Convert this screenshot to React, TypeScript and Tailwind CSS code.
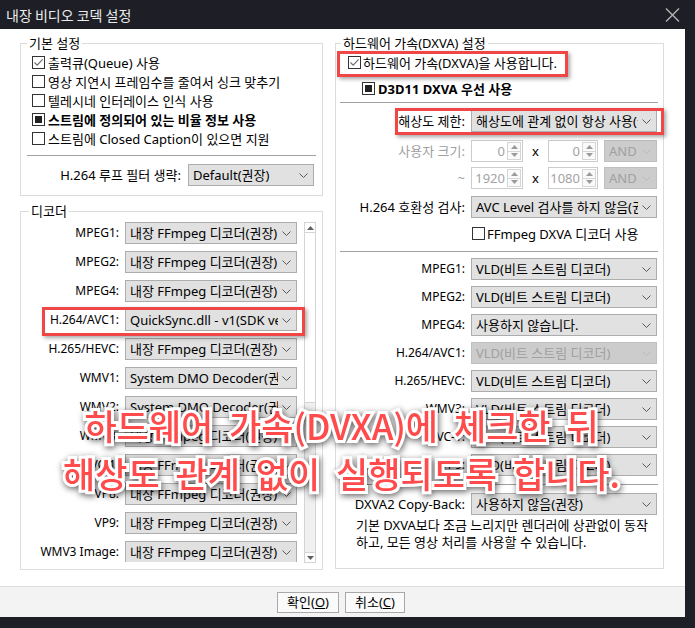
import type { ReactNode } from 'react';

type CheckState = 'on' | 'off' | 'mixed';

function Box({ state }: { state: CheckState }) {
  return (
    <span className="flex h-[13px] w-[13px] shrink-0 items-center justify-center border border-[#333333] bg-white">
      {state === 'on' && (
        <svg width="11" height="11" viewBox="0 0 11 11">
          <path d="M1.5 5.5 L4.2 8.2 L9.6 2.4" fill="none" stroke="#707070" strokeWidth="1.2" />
        </svg>
      )}
      {state === 'mixed' && <span className="h-[7px] w-[7px] bg-[#222222]" />}
    </span>
  );
}

function Chevron({ disabled }: { disabled?: boolean }) {
  return (
    <svg width="9" height="5" viewBox="0 0 9 5" className="shrink-0">
      <path
        d="M0.5 0.5 L4.5 4.5 L8.5 0.5"
        fill="none"
        stroke={disabled ? '#b9b9b9' : '#5a5a5a'}
        strokeWidth="1"
      />
    </svg>
  );
}

function Arrow({ up, color = '#606060' }: { up?: boolean; color?: string }) {
  return (
    <svg width="7" height="4" viewBox="0 0 7 4">
      <path d={up ? 'M0 4 L3.5 0 L7 4 Z' : 'M0 0 L7 0 L3.5 4 Z'} fill={color} />
    </svg>
  );
}

function Combo({
  value,
  className,
  disabled,
}: {
  value: string;
  className: string;
  disabled?: boolean;
}) {
  return (
    <div
      className={`flex h-[22px] shrink-0 items-center border pl-[4px] pr-[5px] ${
        disabled
          ? 'border-[#bfbfbf] bg-[#cccccc] text-[#a0a0a0]'
          : 'border-[#adadad] bg-[#e1e1e1] text-black'
      } ${className}`}
    >
      <span className="min-w-0 flex-1 overflow-hidden whitespace-nowrap leading-[20px]">{value}</span>
      <span className="ml-[4px]">
        <Chevron disabled={disabled} />
      </span>
    </div>
  );
}

function Spin({ value, className }: { value: string; className: string }) {
  return (
    <div className={`flex h-[22px] shrink-0 border border-[#cccccc] bg-white ${className}`}>
      <span className="flex-1 pr-[2px] text-right leading-[20px] text-[#a3a3a3]">{value}</span>
      <div className="my-[1px] mr-[1px] flex w-[14px] flex-col border border-[#d6d6d6] bg-[#fafafa]">
        <span className="flex flex-1 items-center justify-center border-b border-[#d6d6d6]">
          <Arrow up color="#9a9a9a" />
        </span>
        <span className="flex flex-1 items-center justify-center">
          <Arrow color="#9a9a9a" />
        </span>
      </div>
    </div>
  );
}

function Legend({ children, className }: { children: ReactNode; className: string }) {
  return <div className={`-mt-[9px] w-fit bg-white px-[2px] leading-[16px] ${className}`}>{children}</div>;
}

function FormRow({
  label,
  muted,
  small,
  className = '',
  children,
}: {
  label: string;
  muted?: boolean;
  small?: boolean;
  className?: string;
  children: ReactNode;
}) {
  return (
    <div className={`flex items-center ${className}`}>
      <span
        className={`w-[129px] shrink-0 whitespace-nowrap text-right leading-[22px] ${
          muted ? 'text-[#a0a0a0]' : 'text-black'
        } ${small ? 'text-[12px]' : ''}`}
      >
        {label}
      </span>
      <div className="ml-[6px] flex">{children}</div>
    </div>
  );
}

const decoders = [
  { name: 'MPEG1:', value: '내장 FFmpeg 디코더(권장)' },
  { name: 'MPEG2:', value: '내장 FFmpeg 디코더(권장)' },
  { name: 'MPEG4:', value: '내장 FFmpeg 디코더(권장)' },
  { name: 'H.264/AVC1:', value: 'QuickSync.dll - v1(SDK version 1.x)' },
  { name: 'H.265/HEVC:', value: '내장 FFmpeg 디코더(권장)' },
  { name: 'WMV1:', value: 'System DMO Decoder(권장)' },
  { name: 'WMV2:', value: 'System DMO Decoder(권장)' },
  { name: 'WMV3:', value: '내장 FFmpeg 디코더(권장)' },
  { name: 'VC-1:', value: '내장 FFmpeg 디코더(권장)' },
  { name: 'VP8:', value: '내장 FFmpeg 디코더(권장)' },
  { name: 'VP9:', value: '내장 FFmpeg 디코더(권장)' },
  { name: 'WMV3 Image:', value: '내장 FFmpeg 디코더(권장)' },
];

const dxva = [
  { name: 'MPEG1:', value: 'VLD(비트 스트림 디코더)' },
  { name: 'MPEG2:', value: 'VLD(비트 스트림 디코더)' },
  { name: 'MPEG4:', value: '사용하지 않습니다.' },
  { name: 'H.264/AVC1:', value: 'VLD(비트 스트림 디코더)', disabled: true },
  { name: 'H.265/HEVC:', value: 'VLD(비트 스트림 디코더)' },
  { name: 'WMV3:', value: 'VLD(비트 스트림 디코더)' },
  { name: 'VC-1:', value: 'VLD(비트 스트림 디코더)' },
  { name: 'VP9:', value: 'VLD(비트 스트림 디코더)' },
];

const basics: { label: string; state: CheckState; bold?: boolean }[] = [
  { label: '출력큐(Queue) 사용', state: 'on' },
  { label: '영상 지연시 프레임수를 줄여서 싱크 맞추기', state: 'off' },
  { label: '텔레시네 인터레이스 인식 사용', state: 'off' },
  { label: '스트림에 정의되어 있는 비율 정보 사용', state: 'mixed', bold: true },
  { label: '스트림에 Closed Caption이 있으면 지원', state: 'off' },
];

export default function App() {
  return (
    <div className="relative h-[628px] w-[695px] overflow-hidden bg-[#1e1f26] text-[13px] leading-[16px] [font-family:'Noto_Sans','Noto_Sans_CJK_KR',sans-serif]">
      {/* title bar */}
      <div className="flex h-[29px] items-center justify-between pl-[6px] pr-[15px]">
        <span className="text-[14px] text-[#ececec] [font-family:'Noto_Sans_CJK_KR',sans-serif]">
          내장 비디오 코덱 설정
        </span>
        <svg width="15" height="14" viewBox="0 0 15 14">
          <path d="M1 0.5 L14 13.5 M14 0.5 L1 13.5" stroke="#b4b4b4" strokeWidth="1.4" />
        </svg>
      </div>

      <div className="w-[685px] bg-white">
        <div className="flex h-[557px]">
          {/* left column */}
          <div className="flex flex-col pl-[20px] pt-[14px]">
            <div className="flex h-[153px] w-[303px] flex-col border border-[#dcdcdc]">
              <Legend className="ml-[6px]">기본 설정</Legend>
              <div className="mt-[2px] flex flex-col pl-[11px]">
                {basics.map((b) => (
                  <label key={b.label} className="flex h-[19px] items-center">
                    <Box state={b.state} />
                    <span className={`ml-[3px] whitespace-nowrap ${b.bold ? 'font-bold' : ''}`}>
                      {b.label}
                    </span>
                  </label>
                ))}
              </div>
              <div className="mx-[6px] mt-[7px] h-px bg-[#a0a0a0]" />
              <div className="mt-[8px] flex items-center justify-end pr-[8px]">
                <span className="whitespace-nowrap leading-[22px]">H.264 루프 필터 생략:</span>
                <Combo value="Default(권장)" className="ml-[7px] w-[126px]" />
              </div>
            </div>

            <div className="relative mt-[15px] flex h-[359px] w-[303px] flex-col border border-[#dcdcdc]">
              <Legend className="ml-[8px]">디코더</Legend>
              <div className="flex">
                <div className="h-[343px] w-[276px] overflow-hidden">
                  {decoders.map((d) => (
                    <div key={d.name} className="flex h-[29px] items-start pt-[3px]">
                      <span className="w-[98px] shrink-0 whitespace-nowrap text-right text-[12px] leading-[22px]">
                        {d.name}
                      </span>
                      <Combo value={d.value} className="ml-[6px] w-[172px]" />
                    </div>
                  ))}
                </div>
                <div className="ml-[7px] mt-[3px] flex h-[341px] w-[12px] flex-col border border-[#d4d4d4] bg-[#f0f0f0]">
                  <span className="flex h-[10px] items-center justify-center border-b border-[#d4d4d4] bg-white">
                    <Arrow up />
                  </span>
                  <span className="h-[170px] border-b border-[#d4d4d4] bg-white" />
                  <span className="flex-1" />
                  <span className="flex h-[10px] items-center justify-center border-t border-[#d4d4d4] bg-white">
                    <Arrow />
                  </span>
                </div>
              </div>
              <div className="absolute left-[21px] top-[95px] h-[29px] w-[263px] border-[3px] border-[#f04646] shadow-[2px_2px_4px_rgba(0,0,0,0.35)]" />
            </div>
          </div>

          {/* right column */}
          <div className="relative ml-[12px] mt-[14px] flex h-[526px] w-[329px] flex-col border border-[#dcdcdc]">
            <Legend className="ml-[5px]">하드웨어 가속(DXVA) 설정</Legend>
            <label className="mt-[2px] flex h-[19px] items-center pl-[12px]">
              <Box state="on" />
              <span className="ml-[2px] whitespace-nowrap">하드웨어 가속(DXVA)을 사용합니다.</span>
            </label>
            <label className="mt-[7px] flex h-[19px] items-center pl-[26px]">
              <Box state="mixed" />
              <span className="ml-[3px] whitespace-nowrap font-bold">D3D11 DXVA 우선 사용</span>
            </label>
            <div className="ml-[4px] mr-[5px] mt-[4px] h-px bg-[#a0a0a0]" />

            <FormRow label="해상도 제한:" className="mt-[7px]">
              <Combo value="해상도에 관계 없이 항상 사용(권장)" className="w-[186px]" />
            </FormRow>
            <FormRow label="사용자 크기:" muted className="mt-[8px]">
              <Spin value="0" className="w-[52px]" />
              <span className="w-[25px] text-center leading-[22px]">x</span>
              <Spin value="0" className="w-[50px]" />
              <Combo value="AND" disabled className="ml-[6px] w-[53px]" />
            </FormRow>
            <FormRow label="~" muted className="mt-[5px]">
              <Spin value="1920" className="w-[52px]" />
              <span className="w-[25px] text-center leading-[22px]">x</span>
              <Spin value="1080" className="w-[50px]" />
              <Combo value="AND" disabled className="ml-[6px] w-[53px]" />
            </FormRow>
            <FormRow label="H.264 호환성 검사:" className="mt-[7px]">
              <Combo value="AVC Level 검사를 하지 않음(권장)" className="w-[186px]" />
            </FormRow>
            <label className="mt-[6px] flex h-[19px] items-center pl-[136px]">
              <Box state="off" />
              <span className="ml-[2px] whitespace-nowrap">FFmpeg DXVA 디코더 사용</span>
            </label>
            <div className="ml-[4px] mr-[5px] mt-[8px] h-px bg-[#a0a0a0]" />

            {dxva.map((d) => (
              <FormRow key={d.name} label={d.name} small className="mt-[6px]">
                <Combo value={d.value} disabled={d.disabled} className="w-[186px]" />
              </FormRow>
            ))}
            <div className="ml-[4px] mr-[5px] mt-[8px] h-px bg-[#a0a0a0]" />
            <FormRow label="DXVA2 Copy-Back:" className="mt-[8px]">
              <Combo value="사용하지 않음(권장)" className="w-[186px]" />
            </FormRow>
            <p className="mt-[2px] whitespace-nowrap pl-[20px] leading-[17px]">
              기본 DXVA보다 조금 느리지만 렌더러에 상관없이 동작
              <br />
              하고, 모든 영상 처리를 사용할 수 있습니다.
            </p>

            <div className="absolute left-[1px] top-[7px] h-[26px] w-[231px] border-[3px] border-[#f04646] shadow-[2px_2px_4px_rgba(0,0,0,0.35)]" />
            <div className="absolute left-[59px] top-[64px] h-[27px] w-[269px] border-[3px] border-[#f04646] shadow-[2px_2px_4px_rgba(0,0,0,0.35)]" />
          </div>
        </div>

        {/* footer */}
        <div className="flex h-[31px] gap-[6px] border-t border-[#dcdcdc] bg-[#f3f3f3] pl-[277px] pt-[5px]">
          <button className="h-[21px] w-[62px] border border-[#a8a8a8] bg-[#fafafa] leading-[19px]">
            확인(<span className="underline">O</span>)
          </button>
          <button className="h-[21px] w-[60px] border border-[#a8a8a8] bg-[#fafafa] leading-[19px]">
            취소(<span className="underline">C</span>)
          </button>
        </div>
      </div>

      {/* annotation overlay */}
      <div className="pointer-events-none absolute left-0 top-[401px] w-[683px] text-center text-[35px] font-medium leading-[48px] text-[#ff4b4b] [font-family:'Noto_Sans_CJK_KR',sans-serif] [word-spacing:8px] [-webkit-text-stroke:6px_white] [paint-order:stroke_fill] [filter:drop-shadow(1px_2px_3px_rgba(0,0,0,0.6))]">
        하드웨어 가속(DVXA)에 체크한 뒤
        <br />
        해상도 관계 없이 실행되도록 합니다.
      </div>
    </div>
  );
}
